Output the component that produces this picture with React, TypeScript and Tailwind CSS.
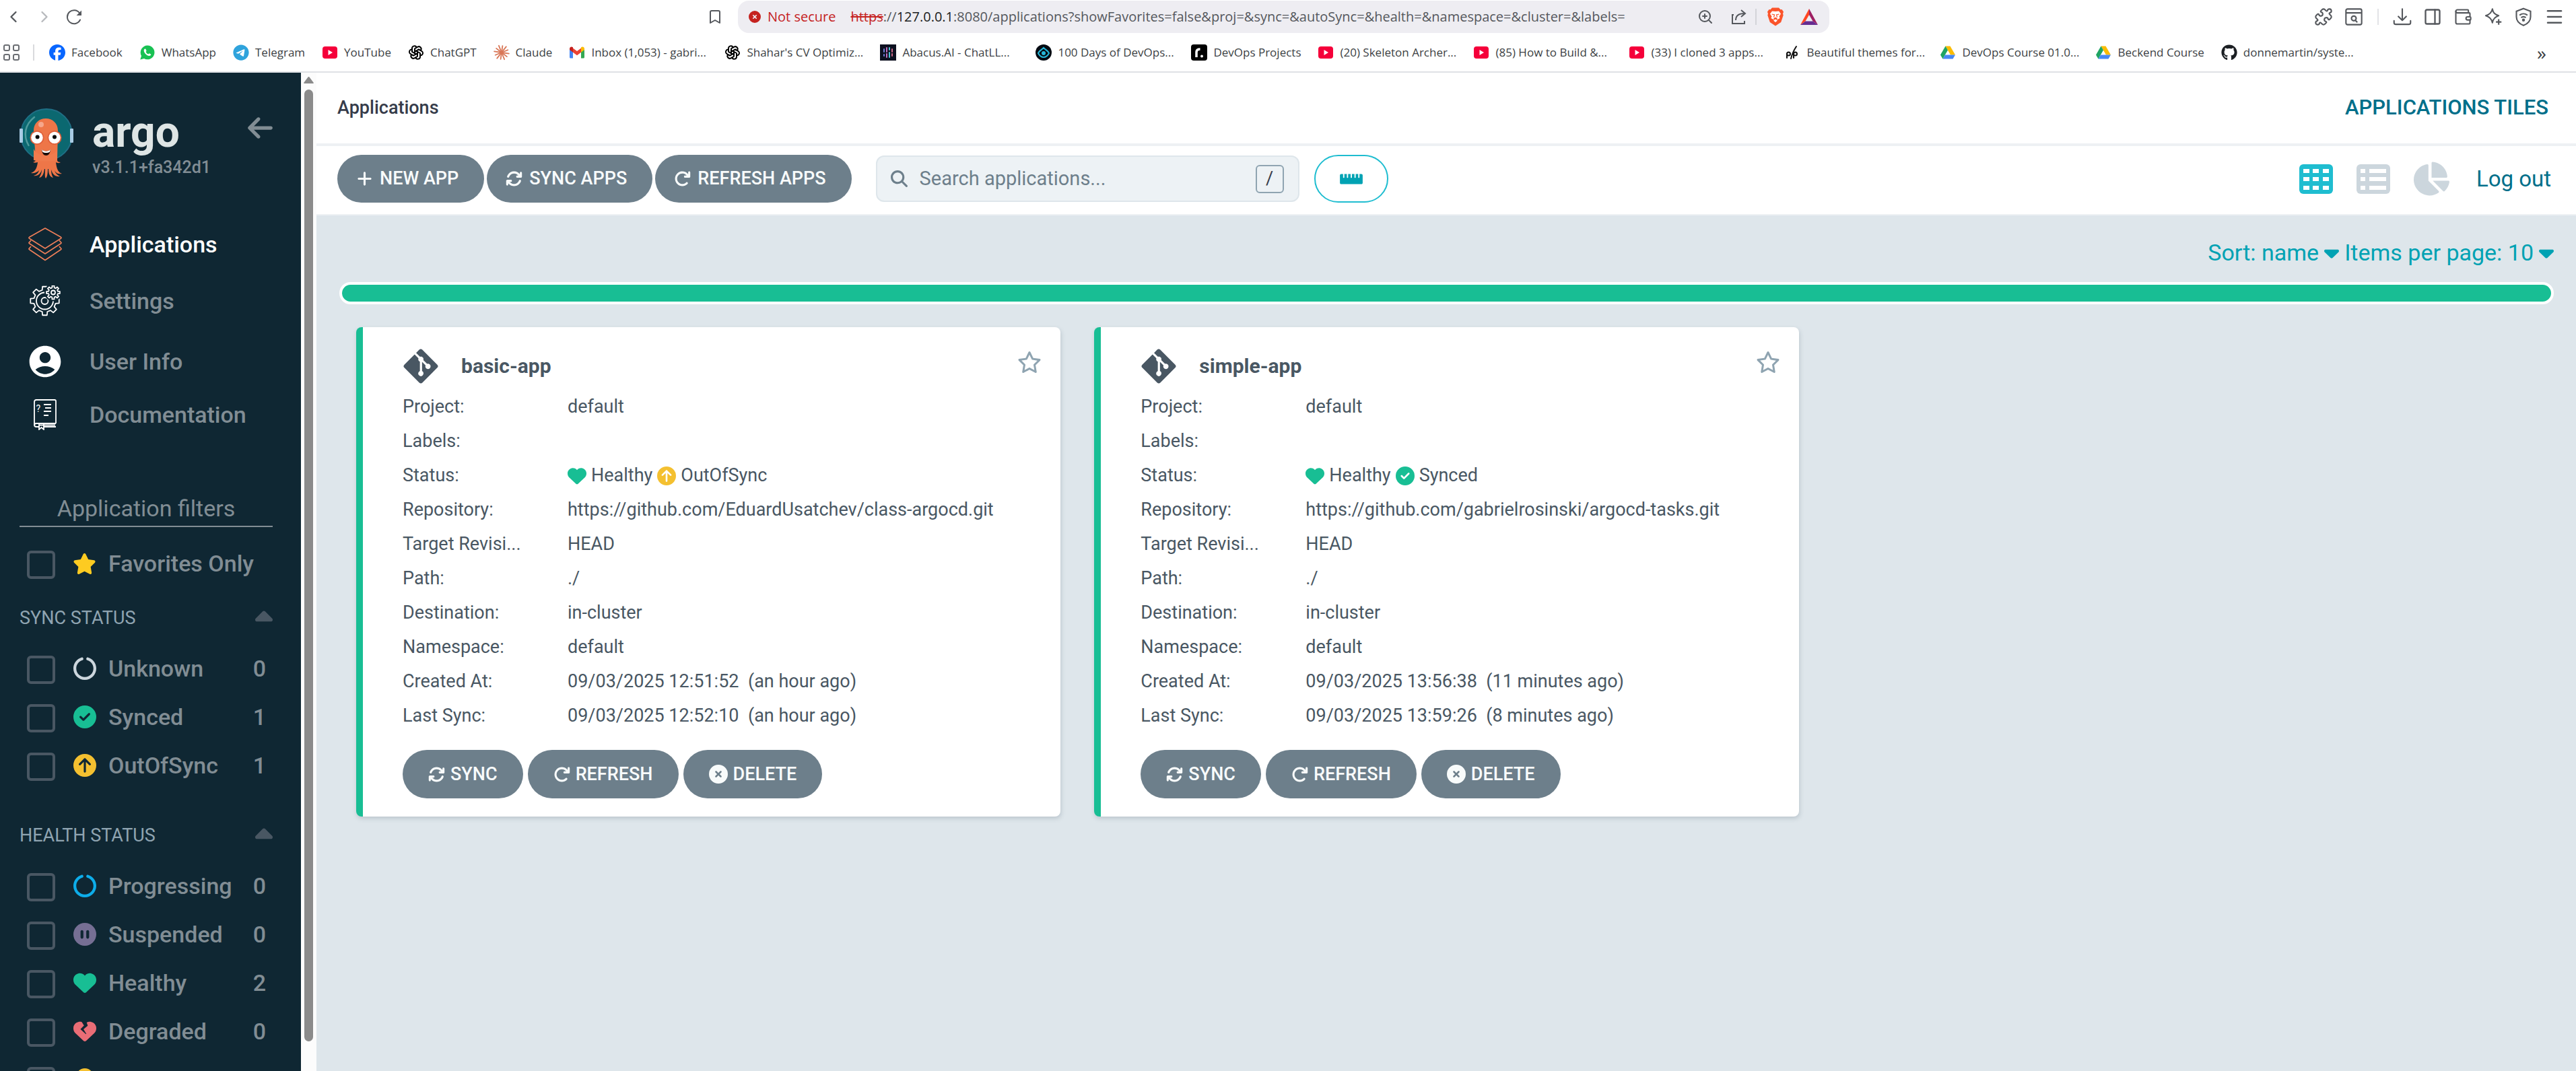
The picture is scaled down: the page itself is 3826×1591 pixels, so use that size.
import React from "react";
import {
  FaArrowLeft,
  FaArrowRotateRight,
  FaArrowsRotate,
  FaCaretDown,
  FaCaretUp,
  FaCircleArrowUp,
  FaCircleCheck,
  FaCircleNotch,
  FaCirclePause,
  FaCircleXmark,
  FaFacebook,
  FaGhost,
  FaGitAlt,
  FaGithub,
  FaHeart,
  FaHeartCrack,
  FaMagnifyingGlass,
  FaPlus,
  FaRegStar,
  FaStar,
  FaTelegram,
} from "react-icons/fa6";
import { FaChartPie, FaRulerHorizontal } from "react-icons/fa";
import { MdAccountCircle } from "react-icons/md";
import { TbBrandOpenai } from "react-icons/tb";
import {
  Bookmark,
  ChevronLeft,
  ChevronRight,
  Menu,
  PanelRight,
  Puzzle,
  Wallet,
  ZoomIn,
} from "lucide-react";

/* ---------- Browser chrome ---------- */

function YouTubeIcon() {
  return (
    <svg viewBox="0 0 24 24" className="size-6">
      <rect x="1" y="3" width="22" height="18" rx="4" fill="#f5003a" />
      <path d="M9.5 8v8l6.5-4z" fill="#fff" />
    </svg>
  );
}

function WhatsAppIcon() {
  return (
    <svg viewBox="0 0 24 24" className="size-6">
      <path d="M12 1.5A10.4 10.4 0 0 0 3 17l-1.7 5.6L7 21A10.4 10.4 0 1 0 12 1.500z" fill="#19c153" />
      <path
        d="M8.300 6.500c-.6.100-1.600 1-1.600 2.500 0 3.300 4.300 7.900 7.800 8 1.600 0 2.700-1 2.800-2.300l-2.700-1.500-1.200 1.400c-1.900-.8-3-1.900-3.800-3.600l1-1.200-1.200-3z"
        fill="#fff"
      />
    </svg>
  );
}

function ClaudeIcon() {
  const rays = [0, 30, 60, 90, 120, 150, 180, 210, 240, 270, 300, 330];
  return (
    <svg viewBox="0 0 24 24" className="size-6" stroke="#d97757" strokeWidth="1.800" strokeLinecap="round">
      {rays.map((a, i) => (
        <line
          key={a}
          x1="12"
          y1="12"
          x2={12 + Math.cos(((a + 8) * Math.PI) / 180) * (i % 2 ? 10 : 11)}
          y2={12 + Math.sin(((a + 8) * Math.PI) / 180) * (i % 2 ? 10 : 11)}
        />
      ))}
    </svg>
  );
}

function GmailIcon() {
  return (
    <svg viewBox="0 0 24 24" className="size-6">
      <path d="M1 6v13a1.500 1.500 0 0 0 1.500 1.500H6V10z" fill="#4285f4" />
      <path d="M23 6v13a1.500 1.500 0 0 1-1.500 1.500H18V10z" fill="#34a853" />
      <path d="M6 5.500v6.200l6 4.500 6-4.500V5.500l-6 4.600z" fill="#ea4335" />
      <path d="M1 6.500C1 3.600 4 2.800 6 4.300v7.400L1 8z" fill="#c5221f" />
      <path d="M23 6.500c0-2.900-3-3.700-5-2.200v7.400L23 8z" fill="#fbbc04" />
    </svg>
  );
}

function DriveIcon() {
  return (
    <svg viewBox="0 0 24 24" className="size-6">
      <path d="M8.500 2.500h7L23 15.500h-7z" fill="#fbbc04" />
      <path d="M8.500 2.500 12 8.600 4.500 21.500 1 15.500z" fill="#1fa463" />
      <path d="M8 15.500h15l-3.500 6h-15z" fill="#4688f4" />
    </svg>
  );
}

function AbacusIcon() {
  return (
    <svg viewBox="0 0 24 24" className="size-6">
      <rect width="24" height="24" fill="#0d1020" />
      <g strokeWidth="2" strokeLinecap="round">
        <path d="M6 7v4M6 15v2" stroke="#6d7fd8" />
        <path d="M10 5v6M10 14v5" stroke="#c46fc0" />
        <path d="M14 5v3M14 12v7" stroke="#4fc3d9" />
        <path d="M18 7v4M18 14v3" stroke="#cf6a8a" />
      </g>
    </svg>
  );
}

function EyeIcon() {
  return (
    <svg viewBox="0 0 24 24" className="size-6">
      <circle cx="12" cy="12" r="12" fill="#050b12" />
      <path d="M12 5C9 8 5 10 4 13c2 4 5 6 8 6s6-2 8-6c-1-3-5-5-8-8z" fill="none" stroke="#25b7d8" strokeWidth="2" />
      <circle cx="12" cy="13" r="3" fill="#25b7d8" />
    </svg>
  );
}

function RoadmapIcon() {
  return (
    <svg viewBox="0 0 24 24" className="size-6">
      <rect width="24" height="24" rx="4" fill="#000" />
      <path d="M8 19v-7.500C8 8.500 10 7 13.500 7" fill="none" stroke="#fff" strokeWidth="3.500" />
      <circle cx="16" cy="17.500" r="2" fill="#fff" />
    </svg>
  );
}

function ThemesIcon() {
  return (
    <svg viewBox="0 0 24 24" className="size-6" fill="none" stroke="#111" strokeWidth="2" strokeLinecap="round">
      <path d="M18 3C14 9 12 13 10 21" />
      <circle cx="6.500" cy="14" r="2.500" />
      <path d="M4 14v6M14 14v6" />
      <circle cx="16.500" cy="14" r="2.500" />
    </svg>
  );
}

type BookmarkItem = { label: string; icon: React.ReactNode; cut?: boolean };

const bookmarks: BookmarkItem[] = [
  { label: "Facebook", icon: <FaFacebook className="size-6 text-[#0866ff]" /> },
  { label: "WhatsApp", icon: <WhatsAppIcon /> },
  { label: "Telegram", icon: <FaTelegram className="size-6 text-[#2fa3dc]" /> },
  { label: "YouTube", icon: <YouTubeIcon /> },
  { label: "ChatGPT", icon: <TbBrandOpenai className="size-6 text-black" /> },
  { label: "Claude", icon: <ClaudeIcon /> },
  { label: "Inbox (1,053) - gabri...", icon: <GmailIcon />, cut: true },
  { label: "Shahar's CV Optimiz...", icon: <TbBrandOpenai className="size-6 text-black" />, cut: true },
  { label: "Abacus.AI - ChatLL...", icon: <AbacusIcon />, cut: true },
  { label: "100 Days of DevOps...", icon: <EyeIcon />, cut: true },
  { label: "DevOps Projects", icon: <RoadmapIcon /> },
  { label: "(20) Skeleton Archer...", icon: <YouTubeIcon />, cut: true },
  { label: "(85) How to Build &...", icon: <YouTubeIcon />, cut: true },
  { label: "(33) I cloned 3 apps...", icon: <YouTubeIcon />, cut: true },
  { label: "Beautiful themes for...", icon: <ThemesIcon />, cut: true },
  { label: "DevOps Course 01.0...", icon: <DriveIcon />, cut: true },
  { label: "Beckend Course", icon: <DriveIcon /> },
  { label: "donnemartin/syste...", icon: <FaGithub className="size-6 text-[#1b1f23]" />, cut: true },
];

function ReloadIcon() {
  return (
    <svg viewBox="0 0 24 24" className="size-6" fill="none" stroke="currentColor" strokeWidth="2" strokeLinecap="round">
      <path d="M21 16.500A10 10 0 1 1 20.500 7" />
      <path d="M18 9h4V5z" fill="currentColor" />
    </svg>
  );
}

function DownloadIcon() {
  return (
    <svg
      viewBox="0 0 24 24"
      className="size-7"
      fill="none"
      stroke="currentColor"
      strokeWidth="1.800"
      strokeLinecap="round"
      strokeLinejoin="round"
    >
      <path d="M12 2v14M7 11.500l5 5 5-5M1.500 17v2.500a2 2 0 0 0 2 2h17a2 2 0 0 0 2-2V17" />
    </svg>
  );
}

function AssistantIcon() {
  return (
    <svg viewBox="0 0 24 24" className="size-7" fill="none" stroke="currentColor" strokeWidth="1.800" strokeLinejoin="round">
      <path d="M11 2c1 5 3 7 8 8.500-5 1.500-7 4-8 9-1-5-3.500-7.500-8.500-9C7.500 9 10 7 11 2z" />
      <path d="M19 15v7M15.500 18.500h7" />
    </svg>
  );
}

function SearchPanelIcon() {
  return (
    <svg viewBox="0 0 24 24" className="size-7" fill="none" stroke="currentColor" strokeWidth="1.800">
      <rect x="2" y="2" width="20" height="20" rx="2" />
      <path d="M2 7h20M14 16.500l2.500 2.500" />
      <circle cx="12" cy="14" r="3" />
    </svg>
  );
}

function VpnShieldIcon() {
  return (
    <svg viewBox="0 0 24 24" className="size-7" fill="none" stroke="currentColor" strokeWidth="1.800">
      <path d="M12 1.500 21 5v7c0 5-4 9-9 11-5-2-9-6-9-11V5z" />
      <path d="M7 10c3-2.500 7-2.500 10 0M9 13c2-1.500 4-1.500 6 0" />
      <circle cx="12" cy="16" r="1" fill="currentColor" />
    </svg>
  );
}

function ShareIcon() {
  return (
    <svg viewBox="0 0 24 24" className="size-6" fill="none" stroke="currentColor" strokeWidth="2">
      <path d="M4 9H2v13h18v-4" />
      <path d="M7 17c0-6 4-10 13-10M15 2l6 5-6 5" />
    </svg>
  );
}

function BraveIcon() {
  return (
    <svg viewBox="0 0 24 27" className="h-7 w-6">
      <path d="M7 0h10l2.500 2.800 2-.3L24 6l-1 3 .7 2-3.500 10.500L12 27l-8.200-5.500L.3 11 1 9 0 6l2.500-3.500 2 .3z" fill="#fb542b" />
      <path
        d="M12 5.500 17 5l3 4-2.500 4 1 2.500-3.500 2-1-.500 1-1.500-3-1.300L9 15.500l1 1.500-1 .5-3.500-2 1-2.500L4 9l3-4zM12 17l3 2-3 2.500L9 19z"
        fill="#fff"
      />
      <path d="M6.500 9.500l4 1-1 3.500M17.500 9.500l-4 1 1 3.500" fill="none" stroke="#fb542b" strokeWidth="1.200" />
    </svg>
  );
}

function BatIcon() {
  return (
    <svg viewBox="0 0 26 24" className="h-6 w-7">
      <path d="M13 0v9L7.500 18.500 0 24z" fill="#ff4724" />
      <path d="M13 0v9l5.500 9.500L26 24z" fill="#9e1f63" />
      <path d="M0 24l7.500-5.500h11L26 24z" fill="#662d91" />
    </svg>
  );
}

function BrowserChrome() {
  return (
    <div className="border-b-2 border-[#dfe1e5] bg-white font-['Open_Sans','Noto_Sans',sans-serif] text-[#3c3f44]">
      <div className="grid h-[50px] grid-cols-[1096fr_1621fr_1109fr] items-center text-[#55585d]">
        <div className="flex items-center justify-between pr-[22px] pl-1.5">
          <div className="flex items-center gap-[18px]">
            <button aria-label="Back">
              <ChevronLeft className="size-7" strokeWidth={2} />
            </button>
            <button aria-label="Forward" className="text-[#b7b9bd]">
              <ChevronRight className="size-7" strokeWidth={2} />
            </button>
            <button aria-label="Reload">
              <ReloadIcon />
            </button>
          </div>
          <button aria-label="Bookmark this page">
            <Bookmark className="h-7 w-6" strokeWidth={2} />
          </button>
        </div>
        <div className="flex h-12 items-center justify-between rounded-2xl bg-[#eeedf2] px-4">
          <div className="flex items-center text-[20px]">
            <FaCircleXmark className="size-[18px] text-[#c5221f]" />
            <span className="ml-2.5 text-[#c5221f]">Not secure</span>
            <span className="ml-[22px] whitespace-pre">
              <span className="text-[#c5221f] line-through">https</span>
              <span>://</span>
              <span className="text-[#1b1d21]">127.0.0.1</span>
              <span>
                :8080/applications?showFavorites=false&amp;proj=&amp;sync=&amp;autoSync=&amp;health=&amp;namespace=&amp;cluster=&amp;labels=
              </span>
            </span>
          </div>
          <div className="flex items-center gap-4">
            <button aria-label="Zoom" className="mr-2.5">
              <ZoomIn className="size-6" strokeWidth={2} />
            </button>
            <button aria-label="Share">
              <ShareIcon />
            </button>
            <span className="-ml-1 h-6 w-0.5 bg-[#d3d4d9]" />
            <button aria-label="Shields">
              <BraveIcon />
            </button>
            <button aria-label="Rewards" className="ml-2">
              <BatIcon />
            </button>
          </div>
        </div>
        <div className="flex items-center justify-end gap-[17px] pr-[17px]">
          <button aria-label="Extensions">
            <Puzzle className="size-7" strokeWidth={1.8} />
          </button>
          <button aria-label="Search tabs">
            <SearchPanelIcon />
          </button>
          <span className="mx-1 h-6 w-0.5 bg-[#e2e3e6]" />
          <button aria-label="Downloads">
            <DownloadIcon />
          </button>
          <button aria-label="Side panel">
            <PanelRight className="size-7" strokeWidth={2} />
          </button>
          <button aria-label="Wallet">
            <Wallet className="size-7" strokeWidth={1.8} />
          </button>
          <button aria-label="Assistant">
            <AssistantIcon />
          </button>
          <button aria-label="VPN">
            <VpnShieldIcon />
          </button>
          <button aria-label="Menu">
            <Menu className="size-[30px]" strokeWidth={2} />
          </button>
        </div>
      </div>
      <nav className="flex h-14 items-center pr-11 pl-[5px] text-[17px]" aria-label="Bookmarks">
        <button aria-label="All bookmarks" className="grid grid-cols-2 gap-1 pr-5">
          <span className="size-2.5 rounded-[3px] border-2 border-[#6a6d72]" />
          <span className="size-2.5 rounded-[3px] border-2 border-[#6a6d72]" />
          <span className="size-2.5 rounded-[3px] border-2 border-[#6a6d72]" />
          <span className="size-2.5 rounded-[3px] border-2 border-[#6a6d72]" />
        </button>
        <span className="mr-[22px] h-6 w-0.5 bg-[#d9dadd]" />
        <div className="flex flex-1 items-center gap-[25px]">
          {bookmarks.map((b) => (
            <a key={b.label} href="#" className="flex items-center gap-[9px] whitespace-nowrap">
              {b.icon}
              <span className={b.cut ? "w-[173px]" : ""}>{b.label}</span>
            </a>
          ))}
        </div>
        <button aria-label="More bookmarks" className="text-[28px] leading-none">
          »
        </button>
      </nav>
    </div>
  );
}

/* ---------- Sidebar ---------- */

function ArgoMascot() {
  return (
    <svg viewBox="0 0 80 106" className="h-[106px] w-20">
      <circle cx="40" cy="39" r="38" fill="#0b6870" stroke="#1f6f85" strokeWidth="2" />
      <rect x="0" y="30" width="5" height="21" rx="1" fill="#a9cbe4" />
      <rect x="75" y="30" width="5" height="21" rx="1" fill="#a9cbe4" />
      <path d="M22 13C8 24 5 40 13.500 55" fill="none" stroke="#4f9a9c" strokeWidth="2.500" strokeLinecap="round" />
      <path
        d="M21 33c0-11 8-18 18-18s18 7 18 18l-1 44c0 2 2 3 5 3-3 2-5 1-7 0 1 9 3 15 9 17-6 1-9-1-11-5 1 4 4 7 8 9-7 1-11-3-13-10 0 5 1 9 3 12-5-1-7-6-7-13h-1c0 7-1 12-3 14-2-2-1-8-1-14h-1c-1 8-4 13-8 13 2-3 4-7 4-12-2 7-7 10-12 9 4-1 7-4 8-8-3 3-7 5-12 4 6-2 9-7 10-16-3 1-5 1-7 0 3-1 4-2 4-4z"
        fill="#ee7648"
      />
      <path d="M21 60v17c12 2 24 2 35 0V60c-2 12-30 14-35 0z" fill="#ef7b4d" />
      <circle cx="32" cy="24" r="4" fill="#f6a78c" />
      <circle cx="26" cy="43.500" r="10.500" fill="#e0603a" />
      <circle cx="52" cy="43.500" r="10.500" fill="#e0603a" />
      <circle cx="26" cy="43.500" r="8.700" fill="#fff" />
      <circle cx="52" cy="43.500" r="8.700" fill="#fff" />
      <circle cx="26.600" cy="42.500" r="3" fill="#0a0a0a" />
      <circle cx="52" cy="42.500" r="3" fill="#0a0a0a" />
      <path d="M33 61c4 3.500 9 3.500 13 0-.500 6-3 9-6.500 9S33.500 67 33 61z" fill="#1a0d0a" />
      <path d="M33 61c4 3.500 9 3.500 13 0l-1 3.500c-3 2-8 2-11 0z" fill="#fff" />
    </svg>
  );
}

function StackIcon() {
  return (
    <svg viewBox="0 0 50 50" className="size-[50px]" fill="none" stroke="#ee7f59" strokeWidth="1.600" strokeLinejoin="round">
      <path d="M25 1 48 14c1.500 1 1.500 1.600 0 2.500L25 31 2 16.500c-1.500-1-1.500-1.600 0-2.500z" />
      <path d="M4 19l-2 2.500c-1.500 1-1.500 1.600 0 2.500L25 39l23-15c1.500-1 1.500-1.600 0-2.500L46 19" />
      <path d="M4 28l-2 2.500c-1.500 1-1.500 1.600 0 2.500L25 48.500 48 33c1.500-1 1.500-1.600 0-2.500L46 28" />
    </svg>
  );
}

function gear(cx: number, cy: number, outer: number, inner: number, teeth: number) {
  const points: string[] = [];
  const step = (Math.PI * 2) / teeth;
  for (let i = 0; i < teeth; i++) {
    const mid = i * step - Math.PI / 2;
    const marks: [number, number][] = [
      [-0.3, inner],
      [-0.2, outer],
      [0.2, outer],
      [0.3, inner],
    ];
    for (const [offset, radius] of marks) {
      const a = mid + offset * step;
      points.push(`${(cx + Math.cos(a) * radius).toFixed(2)} ${(cy + Math.sin(a) * radius).toFixed(2)}`);
    }
  }
  return `M${points.join("L")}Z`;
}

function GearsIcon() {
  return (
    <svg viewBox="0 0 46 46" className="size-[46px]" fill="none" stroke="#fff" strokeWidth="1.800" strokeLinejoin="round">
      <path d={gear(22.5, 23, 21.500, 16.500, 8)} />
      <circle cx="22.500" cy="23" r="12.500" />
      <circle cx="22.500" cy="23" r="5" />
      <circle cx="35" cy="10.500" r="13" fill="#0f2733" stroke="none" />
      <path d={gear(35, 10.5, 10, 7.200, 8)} />
      <circle cx="35" cy="10.500" r="3" />
    </svg>
  );
}

function ManualIcon() {
  return (
    <svg viewBox="0 0 34 46" className="h-[46px] w-[34px]" fill="none" stroke="#fff" strokeWidth="1.800">
      <path d="M33 36V3c0-1.500-.500-2-2-2H4C2 1 1 2 1 4v34c0 2 1 3 3 3h5M14 41h19M33 36H4c-4 0-4 5 0 5M8 38.500h24" />
      <path d="M8 36v9l3.500-3 3.500 3v-9" />
      <path d="M15 8h11M17 13h9M15 18h11M15 24h7" />
      <text x="3.500" y="19" fill="#fff" stroke="none" fontSize="14" fontFamily="Roboto, sans-serif">
        ?
      </text>
    </svg>
  );
}

function NavItem({ icon, label, active, height }: { icon: React.ReactNode; label: string; active?: boolean; height: string }) {
  return (
    <a href="#" className={`flex items-center ${height}`}>
      <span className="flex w-[76px] justify-center">{icon}</span>
      <span className={`ml-7 text-[34px] leading-10 font-medium ${active ? "text-white" : "text-[#818d94]"}`}>{label}</span>
    </a>
  );
}

function FilterRow({ icon, label, count }: { icon: React.ReactNode; label: string; count?: number }) {
  return (
    <label className="flex items-start pl-[11px]">
      <input type="checkbox" className="size-[42px] shrink-0 appearance-none rounded-md border-4 border-[#495763]" />
      <span className="ml-[26px] flex h-[38px] flex-1 items-center">
        <span className="flex w-[35px] justify-center">{icon}</span>
        <span className="ml-[18px] text-[34px] leading-[38px] font-medium whitespace-nowrap">{label}</span>
        {count !== undefined && <span className="mr-2.5 ml-auto text-[34px] leading-[38px] font-medium">{count}</span>}
      </span>
    </label>
  );
}

function FilterGroup({ title, children }: { title: string; children: React.ReactNode }) {
  return (
    <section>
      <button className="flex h-8 w-full items-center justify-between">
        <span className="text-[27px] text-[#8fa4b1]">{title}</span>
        <FaCaretUp className="h-[42px] w-[26px] text-[#495763]" preserveAspectRatio="none" />
      </button>
      <div className="mt-10 flex flex-col gap-[30px]">{children}</div>
    </section>
  );
}

function Sidebar() {
  return (
    <aside className="w-[447px] shrink-0 overflow-hidden bg-[#0f2733] pr-[42px] pl-[29px] text-[#818d94]">
      <div className="mt-[53px] flex items-start">
        <ArgoMascot />
        <div className="ml-7">
          <div className="h-[72px] text-[64px] leading-[72px] font-bold text-[#dee5e5]">argo</div>
          <div className="text-[25px] leading-8 font-medium">v3.1.1+fa342d1</div>
        </div>
        <button aria-label="Collapse sidebar" className="mt-2 ml-auto">
          <FaArrowLeft className="h-[42px] w-[37px]" />
        </button>
      </div>
      <nav className="mt-[54px]">
        <NavItem icon={<StackIcon />} label="Applications" active height="h-[84px]" />
        <NavItem icon={<GearsIcon />} label="Settings" height="h-[84px]" />
        <NavItem icon={<MdAccountCircle className="size-14 text-white" />} label="User Info" height="h-24" />
        <NavItem icon={<ManualIcon />} label="Documentation" height="h-[62px]" />
      </nav>
      <h2 className="mt-[86px] border-b-2 border-[#818d94] pb-1 text-center text-[34px] leading-[44px]">Application filters</h2>
      <div className="mt-[35px]">
        <FilterRow icon={<FaStar className="size-[35px] text-[#fdcb21]" />} label="Favorites Only" />
      </div>
      <div className="mt-[42px] flex flex-col gap-[65px]">
        <FilterGroup title="SYNC STATUS">
          <FilterRow icon={<FaCircleNotch className="size-[34px] text-[#ccd6dd]" />} label="Unknown" count={0} />
          <FilterRow icon={<FaCircleCheck className="size-[34px] text-[#18be94]" />} label="Synced" count={1} />
          <FilterRow icon={<FaCircleArrowUp className="size-[34px] text-[#f4c030]" />} label="OutOfSync" count={1} />
        </FilterGroup>
        <FilterGroup title="HEALTH STATUS">
          <FilterRow icon={<FaCircleNotch className="size-[34px] text-[#0dadea]" />} label="Progressing" count={0} />
          <FilterRow icon={<FaCirclePause className="size-[34px] text-[#766f94]" />} label="Suspended" count={0} />
          <FilterRow icon={<FaHeart className="size-[34px] text-[#18be94]" />} label="Healthy" count={2} />
          <FilterRow icon={<FaHeartCrack className="size-[34px] text-[#e96d76]" />} label="Degraded" count={0} />
          <FilterRow icon={<FaGhost className="size-[34px] text-[#f4c030]" />} label="Missing" count={0} />
        </FilterGroup>
      </div>
    </aside>
  );
}

function ScrollTrack() {
  return (
    <div className="flex w-[23px] shrink-0 flex-col items-center bg-[#fcfcfc] pt-1.5 pb-11">
      <svg viewBox="0 0 15 10" className="h-2.5 w-[15px]">
        <path d="M1 10h13c1 0 1-1 .5-1.500L8.500.6c-.6-.8-1.400-.8-2 0L.5 8.500C0 9 0 10 1 10z" fill="#8b8b8b" />
      </svg>
      <div className="mt-[9px] w-[13px] flex-1 rounded-full bg-[#8b8b8b]" />
    </div>
  );
}

/* ---------- Main area ---------- */

function ToolbarButton({ icon, label }: { icon: React.ReactNode; label: string }) {
  return (
    <button className="flex h-[71px] items-center gap-2.5 rounded-full bg-[#6d7f8b] pr-[38px] pl-7 text-[27px] font-medium whitespace-nowrap text-[#f8fbfb]">
      {icon}
      {label}
    </button>
  );
}

function TilesIcon() {
  return (
    <svg viewBox="0 0 50 44" className="h-11 w-[50px]">
      <rect width="50" height="44" rx="6" fill="#1fbdd0" />
      <g fill="#fff">
        {[6, 20, 35].map((x) => [7, 19, 32].map((y) => <rect key={`${x}-${y}`} x={x} y={y} width="9" height="6" />))}
      </g>
    </svg>
  );
}

function ListIcon() {
  return (
    <svg viewBox="0 0 50 44" className="h-11 w-[50px]">
      <rect width="50" height="44" rx="6" fill="#ccd6dd" />
      <g fill="#fff">
        {[7, 19, 32].map((y) => (
          <React.Fragment key={y}>
            <rect x="6" y={y} width="7" height="6" />
            <rect x="19" y={y} width="25" height="6" />
          </React.Fragment>
        ))}
      </g>
    </svg>
  );
}

function Toolbar() {
  return (
    <div className="flex h-[103px] items-center border-b-2 border-[#eef1f4] bg-white pr-[37px] pb-1 pl-[31px]">
      <div className="flex gap-1">
        <ToolbarButton icon={<FaPlus className="size-[25px]" />} label="NEW APP" />
        <ToolbarButton icon={<FaArrowsRotate className="size-[25px]" />} label="SYNC APPS" />
        <ToolbarButton icon={<FaArrowRotateRight className="size-[25px]" />} label="REFRESH APPS" />
      </div>
      <label className="ml-9 flex h-[69px] w-[629px] items-center rounded-xl border-2 border-[#dee6eb] bg-[#edf2f5] pr-[21px] pl-5">
        <FaMagnifyingGlass className="size-[25px] text-[#6d7f8b]" />
        <input
          type="text"
          aria-label="Search applications"
          placeholder="Search applications..."
          className="ml-[18px] min-w-0 flex-1 bg-transparent text-[29px] placeholder:text-[#6d7f8b] focus:outline-none"
        />
        <kbd className="flex size-[42px] items-center justify-center rounded-md border-2 border-[#8fa4b1] font-['Roboto',sans-serif] text-[27px] text-[#363c4a]">
          /
        </kbd>
      </label>
      <button
        aria-label="Compact view"
        className="ml-[22px] flex h-[71px] w-[110px] items-center justify-center rounded-full border-2 border-[#1fbdd0]"
      >
        <FaRulerHorizontal className="h-[30px] w-[34px] text-[#00a2b3]" />
      </button>
      <div className="ml-auto flex items-center gap-[35px]">
        <button aria-label="Tiles">
          <TilesIcon />
        </button>
        <button aria-label="List">
          <ListIcon />
        </button>
        <button aria-label="Summary">
          <FaChartPie className="size-[53px] text-[#ccd6dd]" />
        </button>
        <a href="#" className="pl-[5px] text-[33px] text-[#006f8a]">
          Log out
        </a>
      </div>
    </div>
  );
}

type App = {
  name: string;
  synced: boolean;
  repo: string;
  created: string;
  lastSync: string;
};

const apps: App[] = [
  {
    name: "basic-app",
    synced: false,
    repo: "https://github.com/EduardUsatchev/class-argocd.git",
    created: "09/03/2025 12:51:52  (an hour ago)",
    lastSync: "09/03/2025 12:52:10  (an hour ago)",
  },
  {
    name: "simple-app",
    synced: true,
    repo: "https://github.com/gabrielrosinski/argocd-tasks.git",
    created: "09/03/2025 13:56:38  (11 minutes ago)",
    lastSync: "09/03/2025 13:59:26  (8 minutes ago)",
  },
];

function CardButton({ icon, label }: { icon: React.ReactNode; label: string }) {
  return (
    <button className="flex h-[72px] items-center gap-2 rounded-full bg-[#6d7f8b] px-[38px] text-[27px] font-medium text-[#f8fbfb]">
      {icon}
      {label}
    </button>
  );
}

function AppCard({ app }: { app: App }) {
  const rows: [string, React.ReactNode][] = [
    ["Project:", "default"],
    ["Labels:", ""],
    [
      "Status:",
      <span key="status" className="flex items-center">
        <FaHeart className="size-7 text-[#18be94]" />
        <span className="ml-[7px]">Healthy</span>
        {app.synced ? (
          <FaCircleCheck className="ml-[7px] size-7 text-[#18be94]" />
        ) : (
          <FaCircleArrowUp className="ml-[7px] size-7 text-[#f4c030]" />
        )}
        <span className="ml-[7px]">{app.synced ? "Synced" : "OutOfSync"}</span>
      </span>,
    ],
    ["Repository:", app.repo],
    ["Target Revisi...", "HEAD"],
    ["Path:", "./"],
    ["Destination:", "in-cluster"],
    ["Namespace:", "default"],
    ["Created At:", app.created],
    ["Last Sync:", app.lastSync],
  ];
  return (
    <article className="rounded-lg border-l-[10px] border-[#18be94] bg-white pt-8 pr-7 pb-[27px] pl-[59px] text-[27px] text-[#495763] shadow-[1px_3px_6px_rgba(109,127,139,0.3)]">
      <header className="flex h-[51px] items-center">
        <FaGitAlt className="-ml-0.5 size-[58px]" />
        <h3 className="ml-[31px] text-[30px] font-bold">{app.name}</h3>
        <button aria-label="Favorite" className="mb-3 ml-auto text-[#8fa4b1]">
          <FaRegStar className="size-9" />
        </button>
      </header>
      <dl className="mt-[10px]">
        {rows.map(([label, value]) => (
          <div key={label} className="flex h-[51px] items-center">
            <dt className="w-[245px]">{label}</dt>
            <dd className="whitespace-pre">{value}</dd>
          </div>
        ))}
      </dl>
      <div className="mt-[25px] flex gap-[7px]">
        <CardButton icon={<FaArrowsRotate className="size-[25px]" />} label="SYNC" />
        <CardButton icon={<FaArrowRotateRight className="size-[25px]" />} label="REFRESH" />
        <CardButton icon={<FaCircleXmark className="size-7" />} label="DELETE" />
      </div>
    </article>
  );
}

export default function App() {
  return (
    <div className="flex h-screen flex-col overflow-hidden bg-[#dee6eb]">
      <BrowserChrome />
      <div className="flex min-h-0 flex-1 font-['Roboto',sans-serif]">
        <Sidebar />
        <ScrollTrack />
        <main className="min-w-0 flex-1">
          <div className="flex h-[109px] items-center justify-between border-b-4 border-[#eef1f4] bg-white pr-[41px] pl-[31px]">
            <h1 className="text-[27px] font-medium text-[#363c4a]">Applications</h1>
            <span className="text-[31px] font-medium text-[#006f8a]">APPLICATIONS TILES</span>
          </div>
          <Toolbar />
          <div className="pr-[33px] pl-[34px]">
            <div className="flex justify-end gap-2 pt-8 text-[34px] leading-[46px] text-[#00a2b3]">
              <button className="flex items-center gap-2">
                Sort: name
                <FaCaretDown className="h-[34px] w-[22px]" preserveAspectRatio="none" />
              </button>
              <button className="flex items-center gap-2">
                Items per page: 10
                <FaCaretDown className="h-[34px] w-[22px]" preserveAspectRatio="none" />
              </button>
            </div>
            <div className="mt-[21px] h-[33px] rounded-full border-4 border-white bg-[#18be94]" />
            <div className="mt-[34px] grid grid-cols-3 gap-[50px] px-[25px]">
              {apps.map((app) => (
                <AppCard key={app.name} app={app} />
              ))}
            </div>
          </div>
        </main>
      </div>
    </div>
  );
}
